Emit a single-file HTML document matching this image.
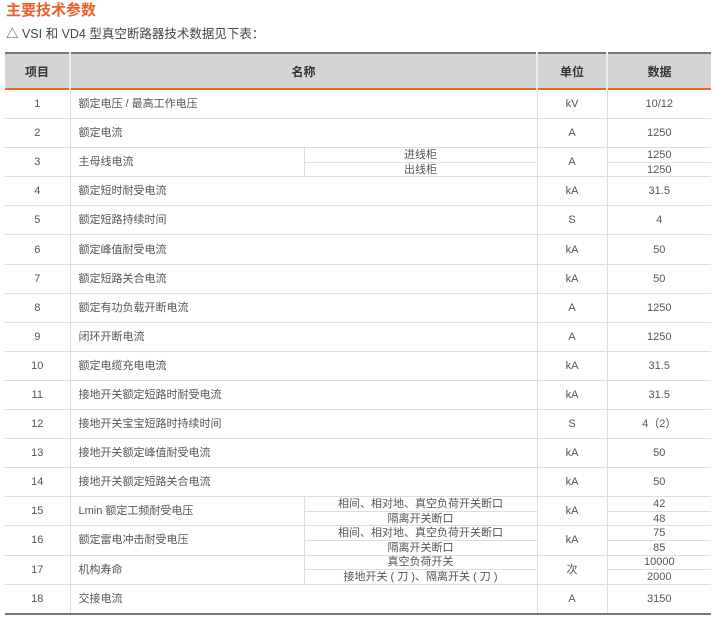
<!DOCTYPE html>
<html><head><meta charset="utf-8"><style>
body{margin:0;background:#fff;width:728px;height:621px;overflow:hidden;font-family:"Liberation Sans","Noto Sans CJK SC",sans-serif;}
.t{position:absolute;left:6px;top:1px;color:#e8602c;font-weight:bold;font-size:15px;line-height:20px;}
.s{position:absolute;left:6px;top:25px;color:#444;font-size:12.5px;line-height:18px;}
table{position:absolute;left:5px;top:52px;width:706px;border-collapse:collapse;table-layout:fixed;font-size:11px;color:#555;}
th{background:#d4d4d6;height:34px;font-size:12px;color:#333;font-weight:bold;border-left:2px solid #eee;padding:0;}
thead tr{border-top:2px solid #777;border-bottom:2px solid #f26522;}
td{border:1.5px solid #dedede;border-top:0;height:28.1px;padding:0;text-align:center;line-height:12px;}
td.l{text-align:left;padding-left:8px;}
td.h{height:12.6px;}
tr.last td{border-bottom:2px solid #777;}
td:first-child,th:first-child{border-left:0;}
td:last-child,th:last-child{border-right:0;}
</style></head><body>
<div class="t">主要技术参数</div>
<div class="s">△ VSI 和 VD4 型真空断路器技术数据见下表：</div>
<table>
<colgroup><col style="width:65px"><col style="width:234px"><col style="width:233px"><col style="width:70px"><col style="width:104px"></colgroup>
<thead><tr><th>项目</th><th colspan="2">名称</th><th>单位</th><th>数据</th></tr></thead>
<tbody>
<tr><td>1</td><td class="l" colspan="2">额定电压 / 最高工作电压</td><td>kV</td><td>10/12</td></tr>
<tr><td>2</td><td class="l" colspan="2">额定电流</td><td>A</td><td>1250</td></tr>
<tr><td rowspan="2">3</td><td class="l" rowspan="2">主母线电流</td><td class="h">进线柜</td><td rowspan="2">A</td><td class="h">1250</td></tr>
<tr><td class="h">出线柜</td><td class="h">1250</td></tr>
<tr><td>4</td><td class="l" colspan="2">额定短时耐受电流</td><td>kA</td><td>31.5</td></tr>
<tr><td>5</td><td class="l" colspan="2">额定短路持续时间</td><td>S</td><td>4</td></tr>
<tr><td>6</td><td class="l" colspan="2">额定峰值耐受电流</td><td>kA</td><td>50</td></tr>
<tr><td>7</td><td class="l" colspan="2">额定短路关合电流</td><td>kA</td><td>50</td></tr>
<tr><td>8</td><td class="l" colspan="2">额定有功负载开断电流</td><td>A</td><td>1250</td></tr>
<tr><td>9</td><td class="l" colspan="2">闭环开断电流</td><td>A</td><td>1250</td></tr>
<tr><td>10</td><td class="l" colspan="2">额定电缆充电电流</td><td>kA</td><td>31.5</td></tr>
<tr><td>11</td><td class="l" colspan="2">接地开关额定短路时耐受电流</td><td>kA</td><td>31.5</td></tr>
<tr><td>12</td><td class="l" colspan="2">接地开关宝宝短路时持续时间</td><td>S</td><td>4（2）</td></tr>
<tr><td>13</td><td class="l" colspan="2">接地开关额定峰值耐受电流</td><td>kA</td><td>50</td></tr>
<tr><td>14</td><td class="l" colspan="2">接地开关额定短路关合电流</td><td>kA</td><td>50</td></tr>
<tr><td rowspan="2">15</td><td class="l" rowspan="2">Lmin 额定工频耐受电压</td><td class="h">相间、相对地、真空负荷开关断口</td><td rowspan="2">kA</td><td class="h">42</td></tr>
<tr><td class="h">隔离开关断口</td><td class="h">48</td></tr>
<tr><td rowspan="2">16</td><td class="l" rowspan="2">额定雷电冲击耐受电压</td><td class="h">相间、相对地、真空负荷开关断口</td><td rowspan="2">kA</td><td class="h">75</td></tr>
<tr><td class="h">隔离开关断口</td><td class="h">85</td></tr>
<tr><td rowspan="2">17</td><td class="l" rowspan="2">机构寿命</td><td class="h">真空负荷开关</td><td rowspan="2">次</td><td class="h">10000</td></tr>
<tr><td class="h">接地开关 ( 刀 )、隔离开关 ( 刀 )</td><td class="h">2000</td></tr>
<tr class="last"><td>18</td><td class="l" colspan="2">交接电流</td><td>A</td><td>3150</td></tr>
</tbody></table>
</body></html>
